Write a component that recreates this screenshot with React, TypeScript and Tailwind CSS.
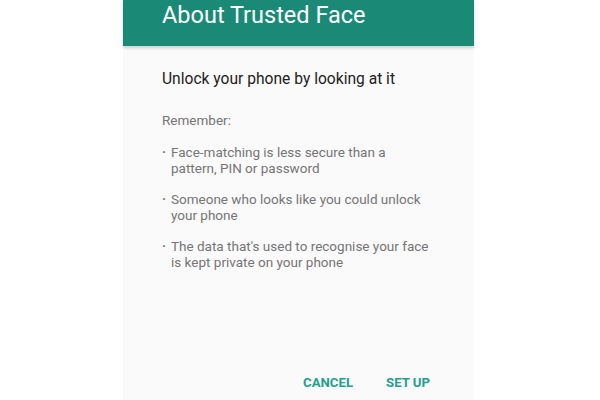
import React from "react";

// Trusted Face info dialog
const bullets: string[] = [
  "Face-matching is less secure than a pattern, PIN or password",
  "Someone who looks like you could unlock your phone",
  "The data that's used to recognise your face is kept private on your phone",
];

const App: React.FC = () => {
  return (
    <div className="w-[600px] h-[400px] bg-white flex pl-[123px] font-['Roboto',sans-serif] overflow-hidden">
      <div className="w-[351px] h-full bg-[#fafafa] flex flex-col">
        {/* Header */}
        <div className="h-[46px] bg-[#1a8a77] shadow-[0_2px_3px_rgba(0,0,0,0.18)] pl-[39px]">
          <h1 className="text-white text-[23.5px] leading-[30px]">About Trusted Face</h1>
        </div>

        {/* Body */}
        <div className="flex-1 flex flex-col px-[39px] pt-[23px]">
          <h2 className="text-[#212121] text-[15.6px] leading-[20px]">
            Unlock your phone by looking at it
          </h2>
          <p className="text-[#757575] text-[13.5px] leading-[18px] mt-[22px]">Remember:</p>

          <ul className="flex flex-col gap-[15px] mt-[15px] text-[#757575] text-[13.5px] leading-[16px]">
            {bullets.map((b, i) => (
              <li key={i} className="flex gap-[5px]">
                <span className="w-[4px] shrink-0 font-bold">·</span>
                <span className="w-[262px]">{b}</span>
              </li>
            ))}
          </ul>

          {/* Actions */}
          <div className="mt-auto mb-[7px] flex justify-end gap-[33px] pr-[5px] text-[#22a08b] text-[13.2px] font-bold">
            <button>CANCEL</button>
            <button>SET UP</button>
          </div>
        </div>
      </div>
    </div>
  );
};

export default App;
